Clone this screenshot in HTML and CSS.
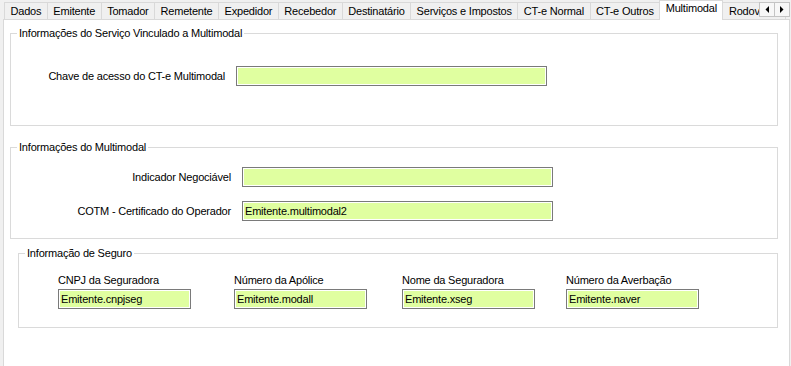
FILE: index.html
```html
<!DOCTYPE html>
<html lang="pt-BR">

<head>
    <meta charset="UTF-8">
    <meta name="viewport" content="width=device-width, initial-scale=1.0">
    <title>CT-e - Multimodal</title>
    <link rel="stylesheet" href="styles.css">
</head>

<body>
    <!-- abas -->
    <div class="tabs">
        <div class="tab">Dados</div>
        <div class="tab">Emitente</div>
        <div class="tab">Tomador</div>
        <div class="tab">Remetente</div>
        <div class="tab">Expedidor</div>
        <div class="tab">Recebedor</div>
        <div class="tab">Destinatário</div>
        <div class="tab">Serviços e Impostos</div>
        <div class="tab">CT-e Normal</div>
        <div class="tab">CT-e Outros</div>
        <div class="tab active">Multimodal</div>
        <div class="tab">Rodoviário</div>

        <div class="tab-scroll">
            <span class="scroll-btn">
                <svg width="4" height="7" viewBox="0 0 4 7"><polygon points="4,0 4,7 0.5,3.5" fill="#000"/></svg>
            </span>
            <span class="scroll-btn">
                <svg width="4" height="7" viewBox="0 0 4 7"><polygon points="0,0 0,7 3.5,3.5" fill="#000"/></svg>
            </span>
        </div>
    </div>

    <div class="panel">
        <!-- serviço vinculado -->
        <fieldset class="group group-vinculo">
            <legend>Informações do Serviço Vinculado a Multimodal</legend>
            <div class="row">
                <label>Chave de acesso do CT-e Multimodal</label>
                <input class="field" type="text" value="">
            </div>
        </fieldset>

        <!-- multimodal -->
        <fieldset class="group group-multimodal">
            <legend>Informações do Multimodal</legend>
            <div class="row">
                <label>Indicador Negociável</label>
                <input class="field" type="text" value="">
            </div>
            <div class="row">
                <label>COTM - Certificado do Operador</label>
                <input class="field" type="text" value="Emitente.multimodal2">
            </div>
        </fieldset>

        <!-- seguro -->
        <fieldset class="group group-seguro">
            <legend>Informação de Seguro</legend>
            <div class="seguro-grid">
                <div class="seguro-item">
                    <label>CNPJ da Seguradora</label>
                    <input class="field" type="text" value="Emitente.cnpjseg">
                </div>
                <div class="seguro-item">
                    <label>Número da Apólice</label>
                    <input class="field" type="text" value="Emitente.modall">
                </div>
                <div class="seguro-item">
                    <label>Nome da Seguradora</label>
                    <input class="field" type="text" value="Emitente.xseg">
                </div>
                <div class="seguro-item">
                    <label>Número da Averbação</label>
                    <input class="field" type="text" value="Emitente.naver">
                </div>
            </div>
        </fieldset>
    </div>
</body>

</html>
```

FILE: styles.css
```css
/* base */
body {
    margin: 0;
    background-color: #f0f0f0;
    font-family: "Liberation Sans", Arial, sans-serif;
    font-size: 11px;
    letter-spacing: -0.2px;
    color: #000;
    overflow: hidden;
}

/* abas */
.tabs {
    position: relative;
    display: flex;
    align-items: flex-end;
    height: 19px;
    padding-left: 4px;
    white-space: nowrap;
}

.tab {
    box-sizing: border-box;
    height: 17px;
    padding: 1px 5.5px 0;
    line-height: 15px;
    border: 1px solid #d9d9d9;
    border-bottom: 0;
    background-color: #f0f0f0;
    margin-left: -1px;
}

.tab:first-child {
    margin-left: 0;
}

.tab.active {
    position: relative;
    z-index: 1;
    height: 20px;
    margin-bottom: -1px;
    padding-top: 0;
    background-color: #ffffff;
}

.tab-scroll {
    position: absolute;
    top: 2px;
    right: 1px;
    z-index: 2;
    display: flex;
}

.scroll-btn {
    box-sizing: border-box;
    width: 16px;
    height: 15px;
    display: flex;
    align-items: center;
    justify-content: center;
    background-color: #f7f7f7;
    border: 1px solid #c4c4c4;
}

.scroll-btn + .scroll-btn {
    margin-left: -1px;
}

/* painel */
.panel {
    height: 360px;
    margin: 0 1px 0 3px;
    background-color: #ffffff;
    border: 1px solid #d9d9d9;
}

/* caixas de grupo */
.group {
    margin: 0 11px 0 6px;
    padding: 0;
    border: 1px solid #dadada;
}

.group legend {
    margin-left: 6px;
    padding: 0 2px;
    line-height: 13px;
}

.group-vinculo {
    margin-top: 7px;
    padding-bottom: 39px;
}

.group-multimodal {
    margin-top: 15px;
    padding-bottom: 17px;
}

.group-seguro {
    margin: 8px 11px 0 14px;
    padding-bottom: 18px;
}

.row {
    display: flex;
    align-items: center;
}

.row label {
    text-align: right;
    margin-right: 11px;
}

.group-vinculo .row {
    margin-top: 26px;
}

.group-vinculo .row label {
    width: 214px;
}

.group-multimodal .row {
    margin-top: 13px;
}

.group-multimodal .row + .row {
    margin-top: 14px;
}

.group-multimodal .row label {
    width: 220px;
}

/* campos */
.field {
    box-sizing: border-box;
    width: 311px;
    height: 20px;
    margin: 0;
    padding: 0 2px;
    border: 1px solid #7a7a7a;
    box-shadow: inset 0 0 0 1px #ffffff;
    background-color: #e0ffa0;
    font: inherit;
    letter-spacing: inherit;
    color: #000;
    outline: none;
}

/* seguro */
.seguro-grid {
    display: grid;
    grid-template-columns: 176px 168px 164px 133px;
    margin: 14px 0 0 39px;
}

.seguro-item {
    display: flex;
    flex-direction: column;
}

.seguro-item label {
    line-height: 13px;
    margin-bottom: 2px;
}

.seguro-item .field {
    width: 133px;
}
```
